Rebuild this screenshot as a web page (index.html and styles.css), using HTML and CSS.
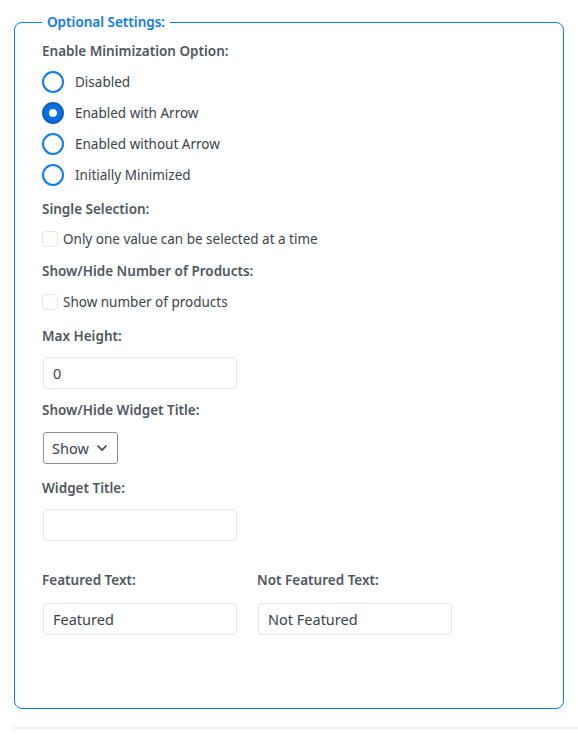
FILE: index.html
```html
<!DOCTYPE html>
<html lang="en">
<head>
    <meta charset="UTF-8">
    <meta name="viewport" content="width=device-width, initial-scale=1.0">
    <title>Widget Settings</title>
    <link rel="stylesheet" href="styles.css">
</head>
<body>
    <fieldset class="settings">
        <legend>Optional Settings:</legend>

        <div class="field-label">Enable Minimization Option:</div>
        <div class="radio-group">
            <label class="radio-row"><input type="radio" name="minimize" value="disabled"> Disabled</label>
            <label class="radio-row"><input type="radio" name="minimize" value="arrow" checked> Enabled with Arrow</label>
            <label class="radio-row"><input type="radio" name="minimize" value="no-arrow"> Enabled without Arrow</label>
            <label class="radio-row"><input type="radio" name="minimize" value="minimized"> Initially Minimized</label>
        </div>

        <div class="field-label">Single Selection:</div>
        <label class="check-row"><input type="checkbox" id="single-select"> Only one value can be selected at a time</label>

        <div class="field-label">Show/Hide Number of Products:</div>
        <label class="check-row check-row-last"><input type="checkbox" id="show-count"> Show number of products</label>

        <label class="field-label" for="max-height">Max Height:</label>
        <input type="text" class="text-input" id="max-height" value="0">

        <label class="field-label" for="title-toggle">Show/Hide Widget Title:</label>
        <select class="select-input" id="title-toggle">
            <option>Show</option>
            <option>Hide</option>
        </select>

        <label class="field-label" for="widget-title">Widget Title:</label>
        <input type="text" class="text-input" id="widget-title" value="">

        <div class="columns">
            <div class="column">
                <label class="field-label" for="featured-text">Featured Text:</label>
                <input type="text" class="text-input" id="featured-text" value="Featured">
            </div>
            <div class="column">
                <label class="field-label" for="not-featured-text">Not Featured Text:</label>
                <input type="text" class="text-input" id="not-featured-text" value="Not Featured">
            </div>
        </div>
    </fieldset>

    <div class="divider"></div>
</body>
</html>
```

FILE: styles.css
```css
:root {
    --primary-color: #0d7bf3;
    --text-color: #3c434a;
    --label-color: #50575e;
    --field-border: #e2e4e7;
}

body {
    font-family: 'Noto Sans', 'Open Sans', sans-serif;
    color: var(--text-color);
    background: #ffffff;
    margin: 0;
    padding-top: 12px;
}

.settings {
    margin: 0 14px;
    padding: 9px 27px 73px 27px;
    border: 1px solid var(--primary-color);
    border-radius: 8px;
    display: flex;
    flex-direction: column;
    align-items: flex-start;
}

.settings legend {
    color: var(--primary-color);
    font-size: 13.5px;
    font-weight: 600;
    line-height: 20px;
    padding: 0 5px;
}

.field-label {
    display: block;
    color: var(--label-color);
    font-size: 13.5px;
    font-weight: 600;
    line-height: 20px;
}

.radio-group {
    display: flex;
    flex-direction: column;
    gap: 9px;
    margin: 10px 0 13px;
}

.radio-row {
    display: flex;
    align-items: center;
    gap: 11px;
    height: 22px;
    font-size: 13.5px;
}

.radio-row input {
    appearance: none;
    margin: 0;
    width: 22px;
    height: 22px;
    border: 2px solid var(--primary-color);
    border-radius: 50%;
    background: #ffffff;
    box-sizing: border-box;
}

.radio-row input:checked {
    background: radial-gradient(circle, #ffffff 0 3.5px, #0b6fe0 4.5px);
    border-color: #0a5fc4;
}

.check-row {
    display: flex;
    align-items: center;
    gap: 5px;
    height: 20px;
    font-size: 13.5px;
    margin: 10px 0 12px;
}

.check-row-last {
    margin: 11px 0 14px;
}

.check-row input {
    appearance: none;
    margin: 0;
    width: 16px;
    height: 16px;
    border: 1px solid var(--field-border);
    border-radius: 4px;
    background: #ffffff;
}

.text-input {
    box-sizing: border-box;
    width: 194px;
    height: 32px;
    margin: 11px 0 11px 1px;
    padding: 0 9px;
    border: 1px solid var(--field-border);
    border-radius: 4px;
    font-family: inherit;
    font-size: 14.5px;
    color: var(--text-color);
    background: #ffffff;
}

.select-input {
    appearance: none;
    box-sizing: border-box;
    width: 75px;
    height: 32px;
    margin: 12px 0 14px 1px;
    padding: 0 0 0 8px;
    border: 1px solid #8c8f94;
    border-radius: 3px;
    font-family: inherit;
    font-size: 14.5px;
    color: var(--text-color);
    background: #ffffff url("data:image/svg+xml,%3Csvg xmlns='http://www.w3.org/2000/svg' width='12' height='8' viewBox='0 0 12 8'%3E%3Cpath d='M1.5 1.5 6 6l4.5-4.5' fill='none' stroke='%233c434a' stroke-width='1.6'/%3E%3C/svg%3E") no-repeat right 9px center;
}

.columns {
    display: grid;
    grid-template-columns: 215px 215px;
    margin-top: 18px;
}

.column .text-input {
    margin-bottom: 0;
    margin-top: 13px;
}

.divider {
    margin: 18px 0 0 13px;
    border-top: 2px solid #f0f0f1;
}
```
